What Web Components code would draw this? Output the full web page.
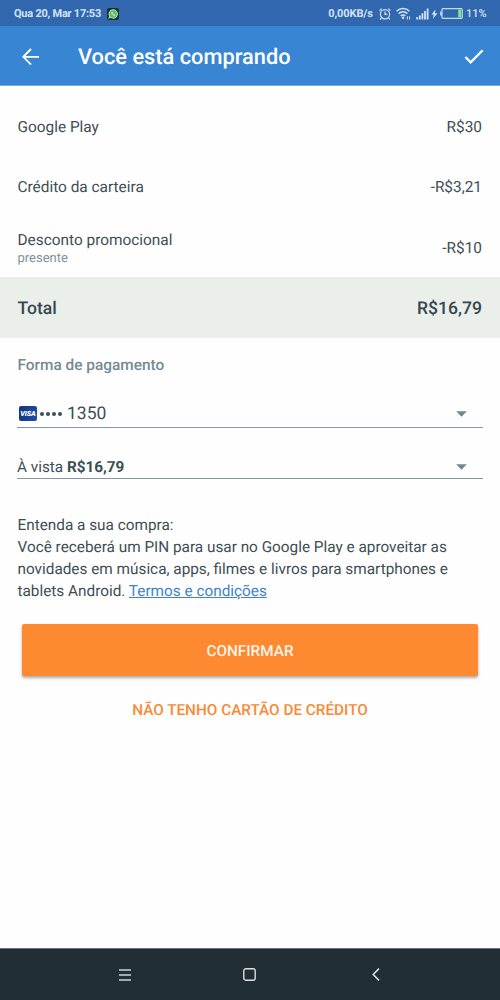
<!DOCTYPE html>
<html lang="pt-BR">
<head>
<meta charset="utf-8">
<title>Você está comprando</title>
<style>
body{margin:0;background:#fefefe;font-family:Roboto,sans-serif;color:#3e4e55;text-rendering:geometricPrecision}
</style>
</head>
<body>
<purchase-screen></purchase-screen>
<script>
const define = (name, html) => {
  const t = document.createElement('template');
  t.innerHTML = html;
  customElements.define(name, class extends HTMLElement {
    constructor() {
      super();
      this.attachShadow({mode: 'open'}).appendChild(t.content.cloneNode(true));
    }
  });
};

define('status-bar', `
<style>
:host{display:flex;height:26px;box-sizing:border-box;align-items:center;justify-content:space-between;padding:1px 13.5px 0 14px;background:#3167ae;color:#d3e3f6;font-size:11px;font-weight:700}
div{display:flex;align-items:center}
svg{display:block;flex:none}
div>span:first-child{letter-spacing:-.24px}
.speed:first-child{letter-spacing:-.1px}
.pct{font-weight:500;margin-left:3px}
</style>
<div><span>Qua 20, Mar 17:53</span>
<svg style="margin-left:6px" width="12" height="12" viewBox="0 0 12 12"><rect width="12" height="12" rx="2.5" fill="#17302f"/><path d="M1.3 10.8l.8-2.6a4.7 4.7 0 1 1 1.9 1.9z" fill="#a5dfa8"/><circle cx="6.2" cy="5.9" r="3.6" fill="#66b96f"/><path d="M4.6 4.1c-.8 1.2 1.7 4.1 3.3 3.6l.3-1-1.1-.5-.5.5c-.7-.3-1-.7-1.2-1.3l.4-.5-.4-1z" fill="#e2f6e2"/></svg></div>
<div><span class="speed">0,00KB/s</span>
<svg style="margin-left:6px" width="12" height="12" viewBox="0 0 12 12" fill="none" stroke="#d3e3f6" stroke-width="1.2"><circle cx="6" cy="6.2" r="4.6"/><path d="M6 3.6v2.8h2.3M.6 2.6L2.6.6M11.4 2.6L9.4.6M2.3 10.2L1.2 11.5M9.7 10.2l1.1 1.3"/></svg>
<svg style="margin-left:5px" width="15" height="13" viewBox="0 0 15 13" fill="none" stroke="#d3e3f6" stroke-width="1.6"><path d="M.6 4.2a9 9 0 0 1 12.8 0M2.7 6.6a6 6 0 0 1 8.6 0M4.8 8.9a3.1 3.1 0 0 1 4.4 0"/><circle cx="7" cy="10.8" r="1.3" fill="#d3e3f6" stroke="none"/><path d="M11.4 9.3v3.2M13.6 9.3v3.2" stroke-width="1"/></svg>
<svg style="margin-left:5px" width="13" height="12" viewBox="0 0 13 12" stroke="#d3e3f6" stroke-width="1.8"><path d="M1.2 9v2.6M3.8 7.4v4.2M6.4 5.3v6.3M9 3v8.6M11.6.6v11"/></svg>
<svg style="margin-left:2px" width="7" height="10" viewBox="0 0 7 10"><path d="M4.6.2L.5 5.5h2.2L2 9.8 6.5 4.2H3.9z" fill="#d3e3f6"/></svg>
<svg style="margin-left:2px" width="23" height="11" viewBox="0 0 23 11"><path d="M.2 3.5h1.6v4H.2z" fill="#d3e3f6"/><rect x="2" y=".6" width="20.2" height="9.8" rx="1" fill="none" stroke="#c4daef" stroke-width="1.2"/><path d="M18.2 1.5h3v8h-3z" fill="#82e58b"/></svg>
<span class="pct">11%</span></div>`);

define('app-bar', `
<style>
:host{display:flex;height:60px;box-sizing:border-box;align-items:center;padding:2px 16px 0 22px;background:#3885d3;color:#fff;border-bottom:1px solid #7aabdc}
h1{margin:0 0 0 38px;padding-top:2px;flex:1;font-size:21.8px;font-weight:500;white-space:nowrap}
svg{display:block}
</style>
<svg width="18" height="18" viewBox="0 0 18 18" fill="none" stroke="#fff" stroke-width="1.8"><path d="M17 8.8H1.5M9 1L1.3 8.8 9 16.6"/></svg>
<h1><slot></slot></h1>
<svg width="20" height="16" viewBox="0 0 20 16" fill="none" stroke="#fff" stroke-width="2.3"><path d="M1.4 8l5.3 5.4L18.6 1.2"/></svg>`);

define('price-row', `
<style>
:host{display:flex;height:60.6px;box-sizing:border-box;align-items:center;justify-content:space-between;padding:1.8px 18px 0 17.5px;font-size:15.4px;line-height:20px}
:host([total]){background:#eaefea;font-size:17.6px;font-weight:500;color:#37474f}
.l{display:flex;flex-direction:column}
::slotted([slot=note]){font-size:13px;line-height:17px;color:#80929a}
</style>
<div class="l"><span><slot></slot></span><slot name="note"></slot></div><slot name="price"></slot>`);

define('select-field', `
<style>
:host{display:flex;box-sizing:border-box;align-items:center;justify-content:space-between;margin:0 17.5px 0 17px;padding:2px 16px 0 0;border-bottom:1px solid #84989f;white-space:nowrap}
div{display:flex;align-items:center}
svg{display:block}
</style>
<div><slot></slot></div>
<svg width="11" height="6" viewBox="0 0 11 6"><path d="M.2.3h10.6L5.5 5.8z" fill="#71868f"/></svg>`);

define('visa-card', `
<style>
:host{display:flex;align-items:center;font-size:17.5px}
.v{width:18px;height:15px;margin:-1px 3px 0 2px;border-radius:2px;background:linear-gradient(110deg,#16337f,#1e4ea8);color:#fff;font:italic 900 7.2px/15px Roboto,sans-serif;text-align:center;letter-spacing:-.1px}
.d{display:flex;gap:2px;margin-right:5px}
i{width:4px;height:4px;border-radius:50%;background:#3e4e55}
</style>
<span class="v">VISA</span><span class="d"><i></i><i></i><i></i><i></i></span><slot></slot>`);

define('action-button', `
<style>
:host{display:block}
button{display:block;width:100%;height:52.5px;border:0;padding:1.5px 0 0;border-radius:2px;background:#fd8930;color:#fff4e8;font:500 15.3px Roboto,sans-serif;text-rendering:inherit;box-shadow:0 2px 3px rgba(60,60,60,.42)}
:host([flat]) button{height:40px;background:none;box-shadow:none;color:#f78b35}
</style>
<button><slot></slot></button>`);

define('system-nav', `
<style>
:host{display:grid;grid-template-columns:repeat(3,126px);justify-content:center;align-items:center;justify-items:center;height:52px;box-sizing:border-box;background:#212e33;border-top:1px solid #687277}
svg{display:block}
</style>
<svg style="margin-left:2px" width="12" height="12" viewBox="0 0 12 12" stroke="#ccd3d6" stroke-width="1.4"><path d="M0 1h12M0 6h12M0 11h12"/></svg>
<svg style="margin-right:1px" width="13" height="13" viewBox="0 0 13 13" fill="none" stroke="#dce1e3" stroke-width="1.4"><rect x=".8" y=".8" width="11.4" height="11.4" rx="2"/></svg>
<svg width="8" height="13" viewBox="0 0 8 13" fill="none" stroke="#dce1e3" stroke-width="1.5"><path d="M7 .6L1.2 6.5 7 12.4"/></svg>`);

define('purchase-screen', `
<style>
:host{display:flex;flex-direction:column;height:1000px;overflow:hidden}
main{flex:1;padding-top:9.7px}
h2{margin:17px 0 0 17.5px;font-size:15.4px;line-height:20px;font-weight:500;color:#778b93}
.card{height:30px;margin-top:23px}
.pay{height:26px;margin-top:25.4px;font-size:15.3px}
.pay span{white-space:pre}
b{font-weight:700}
p{margin:36px 17.5px 0;font-size:15.33px;line-height:21.8px;white-space:nowrap}
a{color:#3f82d0;text-decoration:underline}
.ok{margin:21.2px 22px 0}
.alt{margin:12.9px 22px 0}
</style>
<status-bar></status-bar>
<app-bar>Você está comprando</app-bar>
<main>
<price-row>Google Play<span slot="price">R$30</span></price-row>
<price-row>Crédito da carteira<span slot="price">-R$3,21</span></price-row>
<price-row>Desconto promocional<span slot="note">presente</span><span slot="price">-R$10</span></price-row>
<price-row total>Total<span slot="price">R$16,79</span></price-row>
<h2>Forma de pagamento</h2>
<select-field class="card"><visa-card>1350</visa-card></select-field>
<select-field class="pay"><span>À vista <b>R$16,79</b></span></select-field>
<p>Entenda a sua compra:<br>Você receberá um PIN para usar no Google Play e aproveitar as<br>novidades em música, apps, filmes e livros para smartphones e<br>tablets Android. <a>Termos e condições</a></p>
<action-button class="ok">CONFIRMAR</action-button>
<action-button class="alt" flat>NÃO TENHO CARTÃO DE CRÉDITO</action-button>
</main>
<system-nav></system-nav>`);
</script>
</body>
</html>
